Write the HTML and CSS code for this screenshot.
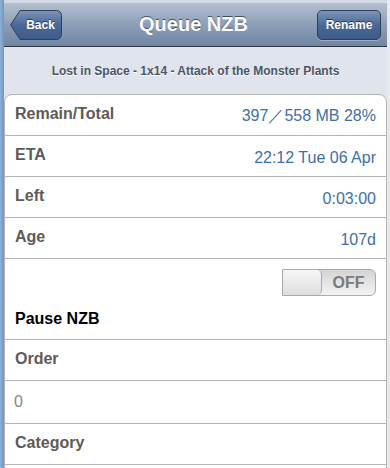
FILE: index.html
```html
<!DOCTYPE html>
<html lang="en">

<head>
    <meta charset="UTF-8" />
    <meta name="viewport" content="width=device-width, initial-scale=1" />
    <title>Queue NZB</title>
    <link rel="stylesheet" href="styles.css">
</head>

<body>
    <div class="page">
        <div class="toolbar">
            <button class="back-btn">
                <svg class="back-shape" width="52" height="30" viewBox="0 0 52 30">
                    <defs>
                        <linearGradient id="btn-grad" x1="0" y1="0" x2="0" y2="1">
                            <stop offset="0" stop-color="#7d95b8" />
                            <stop offset="0.5" stop-color="#4a6796" />
                            <stop offset="1" stop-color="#3e5c8b" />
                        </linearGradient>
                    </defs>
                    <path d="M10 0.5 H46.5 A5 5 0 0 1 51.5 5.5 V24.5 A5 5 0 0 1 46.5 29.5 H10 L0.6 15 Z"
                        fill="url(#btn-grad)" stroke="#2f3f57" stroke-width="1" />
                </svg>
                <span class="back-text">Back</span>
            </button>
            <h1>Queue NZB</h1>
            <button class="bar-btn">Rename</button>
        </div>

        <div class="subtitle">Lost in Space - 1x14 - Attack of the Monster Plants</div>

        <ul class="details">
            <li class="row"><span class="label">Remain/Total</span><span class="value">397／558 MB 28%</span></li>
            <li class="row"><span class="label">ETA</span><span class="value">22:12 Tue 06 Apr</span></li>
            <li class="row"><span class="label">Left</span><span class="value">0:03:00</span></li>
            <li class="row"><span class="label">Age</span><span class="value">107d</span></li>
            <li class="toggle-row">
                <div class="toggle">
                    <span class="knob"></span>
                    <span class="toggle-text">OFF</span>
                </div>
                <span class="toggle-label">Pause NZB</span>
            </li>
            <li class="row"><span class="label">Order</span></li>
            <li class="row plain">0</li>
            <li class="row"><span class="label">Category</span></li>
            <li class="row"></li>
        </ul>
    </div>
</body>

</html>
```

FILE: styles.css
```css
html,
body {
    height: 100%;
}

body {
    margin: 0;
    font-family: 'Liberation Sans', Arial, sans-serif;
    background: linear-gradient(to right, #8fb1d6 0, #6f95c2 4px, #e9e9e9 4px);
    overflow: hidden;
}

.page {
    margin: 0 3px 0 4px;
    min-height: 100%;
    background-color: #dfe4ed;
    border-top: 3px solid #d4dae3;
}

.toolbar {
    display: grid;
    grid-template-columns: 1fr auto 1fr;
    align-items: center;
    height: 44px;
    padding: 0 6px;
    background: linear-gradient(to bottom, #b4c0d0, #8d9fb7 50%, #6f85a3);
    border-bottom: 1px solid #2d3541;
    box-sizing: border-box;
}

.toolbar h1 {
    margin: 0;
    font-size: 20px;
    color: #fff;
    text-shadow: 0 -1px 0 #3f4c60;
    padding-right: 4px;
}

.back-btn,
.bar-btn {
    height: 30px;
    color: #fff;
    font-family: inherit;
    font-size: 12px;
    font-weight: bold;
    text-shadow: 0 -1px 0 #2a3a52;
    cursor: pointer;
}

.back-btn {
    position: relative;
    justify-self: start;
    width: 52px;
    padding: 0 0 0 9px;
    border: none;
    background: none;
}

.back-shape {
    position: absolute;
    left: 0;
    top: 0;
}

.back-text {
    position: relative;
}

.bar-btn {
    justify-self: end;
    width: 64px;
    padding: 0;
    border: 1px solid #2f3f57;
    border-radius: 5px;
    background: linear-gradient(to bottom, #7d95b8, #4a6796 50%, #3e5c8b);
    box-shadow: 0 1px 0 rgba(255, 255, 255, 0.3);
}

.subtitle {
    height: 47px;
    display: flex;
    align-items: center;
    justify-content: center;
    font-size: 12px;
    font-weight: bold;
    color: #4c5566;
    text-shadow: 0 1px 0 #fff;
    padding-top: 1px;
    box-sizing: border-box;
}

.details {
    list-style: none;
    margin: 0;
    padding: 0;
    background-color: #fff;
    border: 1px solid #b4b4b4;
    border-radius: 8px 8px 0 0;
}

.details li {
    border-bottom: 1px solid #b4b4b4;
}

.row {
    display: flex;
    justify-content: space-between;
    align-items: center;
    height: 37px;
    padding: 0 10px 3px 10px;
    font-size: 16px;
}

.label {
    font-weight: bold;
    color: #5f5a57;
}

.value {
    color: #3d6fa9;
    padding-top: 6px;
}

.plain {
    color: #8a8684;
    padding-left: 9px;
    padding-top: 2px;
}

.toggle-row {
    display: flex;
    flex-direction: column;
    align-items: flex-end;
    height: 81px;
    box-sizing: border-box;
    padding: 10px 10px 0 10px;
}

.toggle {
    display: flex;
    width: 94px;
    height: 27px;
    border: 1px solid #a9a9a9;
    border-radius: 0 6px 6px 0;
    box-sizing: border-box;
    background: linear-gradient(to bottom, #d4d4d4, #f3f3f3);
    overflow: hidden;
}

.knob {
    width: 38px;
    border-right: 1px solid #a9a9a9;
    border-radius: 0 5px 5px 0;
    background: linear-gradient(to bottom, #f7f7f7, #dedede);
}

.toggle-text {
    flex: 1;
    text-align: center;
    line-height: 25px;
    font-size: 16px;
    font-weight: bold;
    color: #7a7a7a;
}

.toggle-label {
    align-self: flex-start;
    margin-top: 14px;
    font-size: 16px;
    font-weight: bold;
    color: #000;
}
```
